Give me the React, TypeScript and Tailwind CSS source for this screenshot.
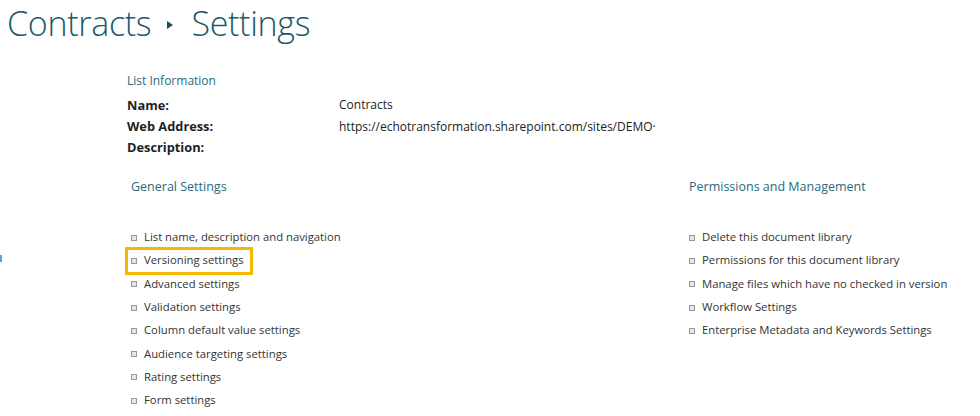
import React from 'react';

const general = [
  'List name, description and navigation',
  'Versioning settings',
  'Advanced settings',
  'Validation settings',
  'Column default value settings',
  'Audience targeting settings',
  'Rating settings',
  'Form settings',
];

const permissions = [
  'Delete this document library',
  'Permissions for this document library',
  'Manage files which have no checked in version',
  'Workflow Settings',
  'Enterprise Metadata and Keywords Settings',
];

const font = { fontFamily: '"Open Sans", "Noto Sans", Arial, sans-serif' };

const Bullet = () => (
  <span className="inline-block w-[6px] h-[6px] border border-[#9a9a9a] bg-[#e6e6e6] shrink-0" />
);

const LinkItem = ({ label, highlighted }: { label: string; highlighted?: boolean }) => (
  <li className="h-[23.3px] flex items-center">
    <span
      className={`flex items-center gap-[7px] h-[22px] ${
        highlighted ? 'outline-[3px] outline outline-[#f5b800] -ml-[3px] pl-[3px] pr-[6px]' : ''
      }`}
    >
      <Bullet />
      <span className="text-[11.3px] text-[#333]">{label}</span>
    </span>
  </li>
);

export default function App() {
  return (
    <div className="relative w-[980px] h-[416px] overflow-hidden bg-white" style={font}>
      {/* stray edge marker */}
      <div className="absolute left-0 top-[255px] w-[2px] h-[7px] bg-[#4aa8e0]" />

      {/* Page title */}
      <h1 className="flex items-center pl-[7px] pt-[1px] h-[46px] text-[34px] font-light text-[#1b5a6b] tracking-[-0.3px]">
        <span>Contracts</span>
        <svg width="6" height="8" viewBox="0 0 6 8" className="ml-[16px] mr-[18px] mt-[3px]">
          <path d="M0 0 L6 4 L0 8 Z" fill="#1b4f5e" />
        </svg>
        <span>Settings</span>
      </h1>

      {/* List information */}
      <div className="ml-[127px] mt-[24px]">
        <div className="h-[22px] leading-[22px] text-[12px] text-[#2a6a7c]">List Information</div>
        <div className="grid grid-cols-[212px_1fr] text-[12px] text-[#222] mt-[2px]">
          <div className="h-[22px] leading-[22px] font-bold text-[12.8px]">Name:</div>
          <div className="h-[22px] leading-[22px]">Contracts</div>
          <div className="h-[21px] leading-[21px] font-bold text-[12.8px]">Web Address:</div>
          <div className="h-[21px] leading-[21px]">https://echotransformation.sharepoint.com/sites/DEMO·</div>
          <div className="h-[21px] leading-[21px] font-bold text-[12.8px]">Description:</div>
          <div className="h-[21px] leading-[21px]" />
        </div>
      </div>

      {/* Settings columns */}
      <div className="flex mt-[18px]">
        <div className="ml-[131px] w-[558px]">
          <div className="h-[22px] leading-[22px] text-[12.5px] text-[#2a6a7c]">General Settings</div>
          <ul className="mt-[28px]">
            {general.map((g) => (
              <LinkItem key={g} label={g} highlighted={g === 'Versioning settings'} />
            ))}
          </ul>
        </div>
        <div>
          <div className="h-[22px] leading-[22px] text-[12.5px] text-[#2a6a7c]">Permissions and Management</div>
          <ul className="mt-[28px]">
            {permissions.map((p) => (
              <LinkItem key={p} label={p} />
            ))}
          </ul>
        </div>
      </div>
    </div>
  );
}
